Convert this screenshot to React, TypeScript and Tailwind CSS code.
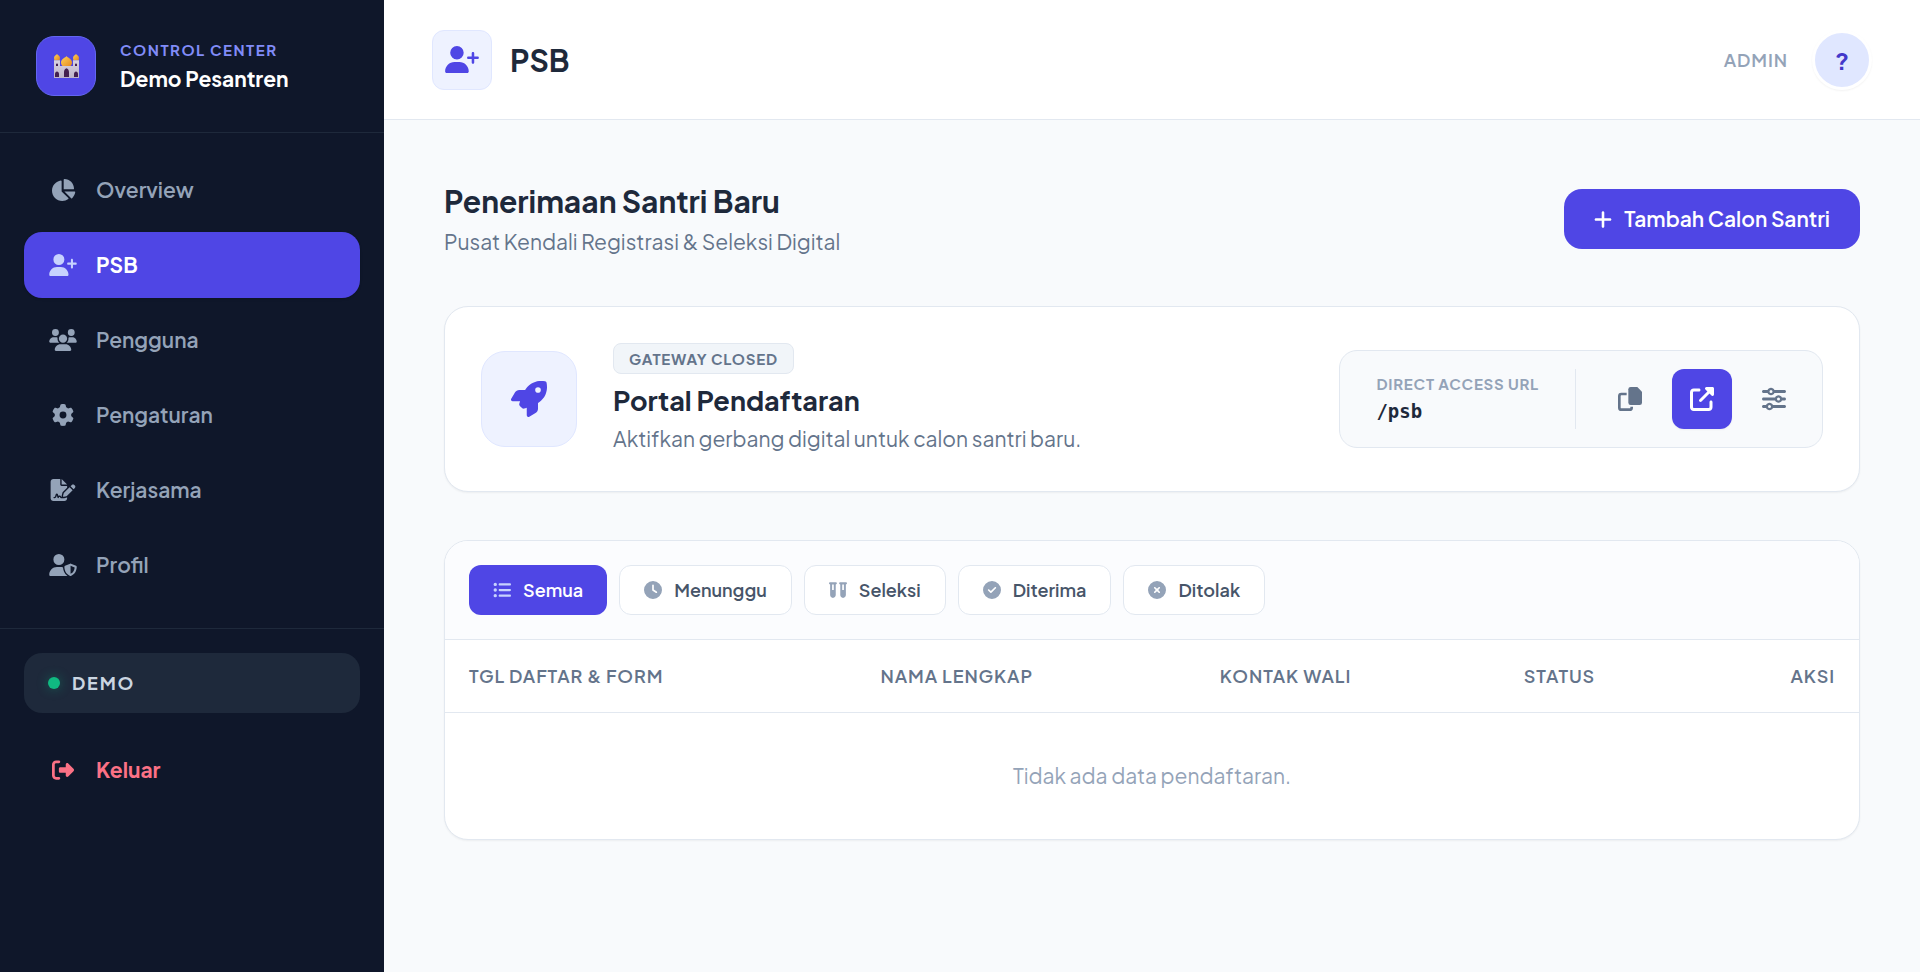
import type { IconType } from "react-icons";
import {
  FaChartPie,
  FaCircleCheck,
  FaCircleXmark,
  FaClock,
  FaFileSignature,
  FaGear,
  FaListUl,
  FaPlus,
  FaRightFromBracket,
  FaRocket,
  FaSliders,
  FaUpRightFromSquare,
  FaUserPlus,
  FaUserShield,
  FaUsers,
  FaVials,
} from "react-icons/fa6";

const navItems: { label: string; icon: IconType; active?: boolean }[] = [
  { label: "Overview", icon: FaChartPie },
  { label: "PSB", icon: FaUserPlus, active: true },
  { label: "Pengguna", icon: FaUsers },
  { label: "Pengaturan", icon: FaGear },
  { label: "Kerjasama", icon: FaFileSignature },
  { label: "Profil", icon: FaUserShield },
];

const filters: { label: string; icon: IconType; active?: boolean }[] = [
  { label: "Semua", icon: FaListUl, active: true },
  { label: "Menunggu", icon: FaClock },
  { label: "Seleksi", icon: FaVials },
  { label: "Diterima", icon: FaCircleCheck },
  { label: "Ditolak", icon: FaCircleXmark },
];

const columns = [
  { label: "Tgl Daftar & Form", className: "w-[29.1%] text-left" },
  { label: "Nama Lengkap", className: "w-[24%] text-left" },
  { label: "Kontak Wali", className: "w-[21.5%] text-left" },
  { label: "Status", className: "text-left" },
  { label: "Aksi", className: "text-right" },
];

function MosqueLogo() {
  return (
    <svg viewBox="0 0 25 24" className="h-6 w-[25px]" aria-hidden="true">
      <defs>
        <linearGradient id="dome" x1="0" y1="0" x2="1" y2="1">
          <stop offset="0" stopColor="#ffd35a" />
          <stop offset="1" stopColor="#e58a1f" />
        </linearGradient>
        <linearGradient id="wall" x1="0" y1="0" x2="0" y2="1">
          <stop offset="0" stopColor="#d9d3e0" />
          <stop offset="1" stopColor="#bdb4c8" />
        </linearGradient>
      </defs>
      <path d="M0 6h6v18H0zM19 6h6v18h-6zM5 12h15v12H5z" fill="url(#wall)" />
      <path d="M0 5.500h6v1H0zM19 5.500h6v1h-6z" fill="#a79cb5" />
      <path d="M3 0c.6 1.200 3 1.800 3 4 0 .8-.3 1.400-.7 2H.7C.3 5.400 0 4.800 0 4c0-2.200 2.400-2.800 3-4z" fill="url(#dome)" />
      <path d="M22 0c.6 1.200 3 1.800 3 4 0 .8-.3 1.400-.7 2h-4.600c-.4-.6-.7-1.200-.7-2 0-2.200 2.400-2.800 3-4z" fill="url(#dome)" />
      <path d="M12.500 2c1 1.800 5.500 2.700 5.500 6.500 0 1.500-.6 2.600-1.500 3.500h-8C7.600 11.100 7 10 7 8.500 7 4.700 11.500 3.800 12.500 2z" fill="url(#dome)" />
      <path
        d="M2 10.500a1 1 0 0 1 2 0V12H2zM21 10.500a1 1 0 0 1 2 0V12h-2zM1 20c0-1.600 1-2.500 2-2.500s2 .9 2 2.500v3H1zM20 20c0-1.600 1-2.500 2-2.500s2 .9 2 2.500v3h-4zM10 18c0-2 1.200-3 2.500-3.700 1.300.7 2.500 1.700 2.500 3.700v5h-5z"
        fill="#43204f"
      />
    </svg>
  );
}

function CopyIcon() {
  return (
    <svg viewBox="0 0 72 72" className="size-6" aria-hidden="true">
      <path
        d="M26 21H10a6 6 0 0 0-6 6v35a6 6 0 0 0 6 6h25a6 6 0 0 0 6-6v-3"
        fill="none"
        stroke="currentColor"
        strokeWidth="8"
      />
      <path
        d="M38 0h20l14 14v33a7 7 0 0 1-7 7H38a7 7 0 0 1-7-7V7a7 7 0 0 1 7-7z"
        fill="currentColor"
      />
    </svg>
  );
}

function Sidebar() {
  return (
    <aside className="w-96 shrink-0 bg-[#0f172a]">
      <div className="flex items-center gap-6 border-b border-[#1e293b] p-9">
        <div className="flex size-[60px] items-center justify-center rounded-[18px] border border-[#6366f1] bg-[#4f46e5]">
          <MosqueLogo />
        </div>
        <div>
          <p className="text-[15px] leading-[26px] font-bold tracking-widest text-[#818cf8] uppercase">
            Control Center
          </p>
          <p className="text-[21px] leading-8 font-bold text-white">Demo Pesantren</p>
        </div>
      </div>

      <nav className="flex flex-col gap-[9px] px-6 pt-6 pb-[30px]">
        {navItems.map(({ label, icon: Icon, active }) => (
          <a
            key={label}
            href="#"
            aria-current={active ? "page" : undefined}
            className={`flex h-[66px] items-center gap-[18px] rounded-[18px] px-6 text-[21px] ${
              active
                ? "bg-[#4f46e5] font-bold text-white shadow-sm"
                : "font-semibold text-[#94a3b8] hover:bg-[#1e293b]"
            }`}
          >
            <span className="flex w-[30px] justify-center">
              <Icon className={`h-[22px] w-7 ${active ? "text-[#c7d2fe]" : ""}`} />
            </span>
            {label}
          </a>
        ))}
      </nav>

      <div className="flex flex-col gap-6 border-t border-[#1e293b] p-6">
        <div className="flex h-[60px] items-center gap-3 rounded-[18px] bg-[#1e293b] px-6">
          <span className="size-3 rounded-full bg-[#10b981] shadow-[0_0_12px_rgba(16,185,129,0.4)]" />
          <span className="text-[18px] leading-6 font-bold tracking-widest text-[#cbd5e1]">DEMO</span>
        </div>
        <button
          type="button"
          className="flex h-[66px] items-center gap-[18px] rounded-[18px] px-6 text-[21px] font-bold text-[#fb7185]"
        >
          <span className="flex w-[30px] justify-center">
            <FaRightFromBracket className="h-[22px] w-7" />
          </span>
          Keluar
        </button>
      </div>
    </aside>
  );
}

function Topbar() {
  return (
    <header className="flex h-[120px] items-center justify-between border-b border-[#e2e8f0] bg-white px-12">
      <div className="flex items-center gap-[18px]">
        <div className="flex size-[60px] items-center justify-center rounded-xl border border-[#e0e7ff] bg-[#eef2ff] text-[#4f46e5]">
          <FaUserPlus className="h-[27px] w-[34px]" />
        </div>
        <h1 className="text-[30px] leading-[36px] font-bold text-[#1e293b]">PSB</h1>
      </div>
      <div className="flex items-center gap-6">
        <span className="text-[18px] font-semibold tracking-wider text-[#94a3b8]">ADMIN</span>
        <button
          type="button"
          className="size-[60px] rounded-full border-[3px] border-white bg-[#e0e7ff] text-[24px] font-bold text-[#4338ca] shadow-xs"
        >
          ?
        </button>
      </div>
    </header>
  );
}

function PortalCard() {
  return (
    <section className="flex items-center justify-between rounded-3xl border border-[#e2e8f0] bg-white p-9 shadow-xs">
      <div className="flex items-center gap-9">
        <div className="flex size-24 items-center justify-center rounded-3xl border border-[#e0e7ff] bg-[#eef2ff] text-[#4f46e5]">
          <FaRocket className="size-9" />
        </div>
        <div className="flex flex-col items-start">
          <span className="rounded-lg border border-[#e2e8f0] bg-[#f1f5f9] px-[15px] text-[15px] leading-[29px] font-bold tracking-wider text-[#64748b] uppercase">
            Gateway Closed
          </span>
          <h3 className="mt-2 text-[27px] leading-[37px] font-bold text-[#1e293b]">
            Portal Pendaftaran
          </h3>
          <p className="mt-1 text-[21px] leading-8 text-[#64748b]">
            Aktifkan gerbang digital untuk calon santri baru.
          </p>
        </div>
      </div>

      <div className="flex items-center gap-3 rounded-[18px] border border-[#e2e8f0] bg-[#f8fafc] p-[18px]">
        <div className="mr-3 flex h-[60px] flex-col justify-center gap-0.5 border-r border-[#e2e8f0] pr-9 pl-[18px]">
          <span className="text-[15px] leading-[22px] font-bold tracking-wider text-[#94a3b8] uppercase">
            Direct Access URL
          </span>
          <span className="font-['DejaVu_Sans_Mono',monospace] text-[19px] leading-7 font-bold text-[#1e293b]">
            /psb
          </span>
        </div>
        <button
          type="button"
          aria-label="Salin tautan"
          className="flex size-[60px] items-center justify-center rounded-xl text-[#64748b]"
        >
          <CopyIcon />
        </button>
        <a
          href="#"
          aria-label="Buka portal"
          className="flex size-[60px] items-center justify-center rounded-xl bg-[#4f46e5] text-white shadow-xs"
        >
          <FaUpRightFromSquare className="size-6" />
        </a>
        <button
          type="button"
          aria-label="Pengaturan portal"
          className="flex size-[60px] items-center justify-center rounded-xl text-[#64748b]"
        >
          <FaSliders className="size-6" />
        </button>
      </div>
    </section>
  );
}

function ApplicantsCard() {
  return (
    <section className="overflow-hidden rounded-3xl border border-[#e2e8f0] bg-white shadow-xs">
      <div className="flex gap-3 border-b border-[#e2e8f0] bg-[#fbfcfe] p-6">
        {filters.map(({ label, icon: Icon, active }) => (
          <button
            key={label}
            type="button"
            className={`flex h-[50px] items-center gap-3 rounded-xl px-6 text-[18px] leading-6 font-semibold ${
              active
                ? "bg-[#4f46e5] text-white"
                : "border border-[#e2e8f0] bg-white text-[#475569]"
            }`}
          >
            <Icon className={`size-[18px] ${active ? "text-[#c7d2fe]" : "text-[#94a3b8]"}`} />
            {label}
          </button>
        ))}
      </div>

      <table className="w-full table-fixed">
        <thead>
          <tr className="h-[72px] border-b border-[#e2e8f0]">
            {columns.map(({ label, className }) => (
              <th
                key={label}
                className={`px-6 text-[18px] leading-6 font-semibold tracking-wider text-[#64748b] uppercase ${className}`}
              >
                {label}
              </th>
            ))}
          </tr>
        </thead>
        <tbody>
          <tr className="h-[127px]">
            <td colSpan={columns.length} className="text-center text-[21px] text-[#94a3b8]">
              Tidak ada data pendaftaran.
            </td>
          </tr>
        </tbody>
      </table>
    </section>
  );
}

export default function App() {
  return (
    <div className="flex min-h-screen bg-[#f8fafc] font-['Plus_Jakarta_Sans',Inter,sans-serif]">
      <Sidebar />
      <div className="min-w-0 flex-1">
        <Topbar />
        <main className="flex flex-col gap-12 p-[60px]">
          <div className="flex items-center justify-between">
            <div>
              <h2 className="text-[30px] leading-[42px] font-bold text-[#1e293b]">
                Penerimaan Santri Baru
              </h2>
              <p className="mt-1 text-[21px] leading-8 text-[#64748b]">
                Pusat Kendali Registrasi &amp; Seleksi Digital
              </p>
            </div>
            <button
              type="button"
              className="flex h-[60px] items-center gap-3 rounded-[18px] bg-[#4f46e5] px-[30px] text-[21px] font-semibold text-white"
            >
              <FaPlus className="h-[21px] w-[18px]" />
              Tambah Calon Santri
            </button>
          </div>
          <PortalCard />
          <ApplicantsCard />
        </main>
      </div>
    </div>
  );
}
